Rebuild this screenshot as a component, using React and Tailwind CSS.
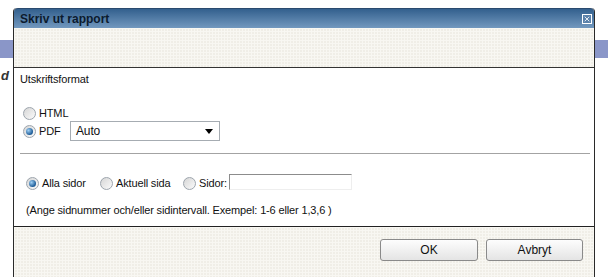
import { X } from 'lucide-react'

const font = 'font-["Liberation_Sans",Arial,sans-serif]'

function Radio({ checked }) {
  return (
    <span className="inline-flex w-[13px] h-[13px] shrink-0 items-center justify-center rounded-full border border-[#9da5ad] bg-[linear-gradient(135deg,#d6d6d6,#fbfbfb)]">
      {checked && (
        <span className="w-[7px] h-[7px] rounded-full bg-[radial-gradient(circle_at_35%_35%,#9fd0f5,#1b5a96_70%)]" />
      )}
    </span>
  )
}

function Option({ checked, label, className = '' }) {
  return (
    <label className={`flex shrink-0 items-center gap-[3px] ${className}`}>
      <Radio checked={checked} />
      <span>{label}</span>
    </label>
  )
}

const textured =
  'bg-[#f0eee7] bg-[linear-gradient(90deg,#f8f7f2_1px,transparent_1px),linear-gradient(#f8f7f2_1px,transparent_1px)] bg-[length:3px_3px]'

export default function App() {
  return (
    <div className={`relative w-[608px] h-[277px] overflow-hidden bg-white ${font}`}>
      {/* page behind the dialog */}
      <div className="mt-[40px] h-[18px] bg-[#8a96c8]" />
      <div className="mt-[8px] pl-[1px] text-[13px] font-bold italic text-[#333]">d</div>

      {/* dialog */}
      <div className="absolute left-[13px] top-[8px] w-[582px] h-[280px] flex flex-col border-x border-[#2a2a2a] rounded-t-[4px]">
        <div className="h-[20px] flex items-center justify-between pl-[6px] pr-[2px] rounded-t-[4px] bg-[linear-gradient(to_bottom,#33608e,#7298be)] border-t border-[#2a4a6e]">
          <span className="text-[12px] font-bold text-[#0c1b2e]">Skriv ut rapport</span>
          <span className="w-[10px] h-[10px] flex items-center justify-center border border-white bg-[#5c82aa]">
            <X className="w-[8px] h-[8px] text-white" strokeWidth={2.5} />
          </span>
        </div>

        <div className={`h-[40px] border-b border-[#333] ${textured}`} />

        <div className="h-[159px] border-b border-[#222] bg-white pl-[6px] pr-[4px] text-[11px] tracking-[-0.15px] text-[#111] flex flex-col">
          <div className="mt-[5px] leading-[13px]">Utskriftsformat</div>

          <Option className="mt-[20px] ml-[3px] h-[14px]" label="HTML" />

          <div className="mt-[1px] ml-[3px] h-[20px] flex items-center">
            <Option checked className="w-[47px]" label="PDF" />
            <div className="w-[150px] h-[20px] border border-[#a6acb2] flex items-center justify-between pl-[5px] pr-[6px] text-[12px]">
              <span>Auto</span>
              <span className="w-0 h-0 border-x-[4px] border-x-transparent border-t-[5px] border-t-black" />
            </div>
          </div>

          <div className="mt-[12px] h-px bg-[#a3a3a3]" />

          <div className="mt-[19px] ml-[6px] h-[18px] flex items-center">
            <Option checked className="w-[74px] translate-y-[1px]" label="Alla sidor" />
            <Option className="w-[83px] translate-y-[1px]" label="Aktuell sida" />
            <Option className="w-[46px] translate-y-[1px]" label="Sidor:" />
            <div className="w-[123px] h-[16px] border-t border-l border-[#8c8c8c] border-r border-b border-r-[#eee] border-b-[#eee]" />
          </div>

          <div className="mt-[13px] ml-[6px] leading-[12px]">
            (Ange sidnummer och/eller sidintervall. Exempel: 1-6 eller 1,3,6 )
          </div>
        </div>

        <div className={`flex-1 flex justify-end gap-[8px] pt-[12px] pr-[11px] ${textured}`}>
          <button className="w-[98px] h-[22px] rounded-[3px] border border-[#8a8a8a] bg-[linear-gradient(to_bottom,#fdfdfd,#e4e4e4)] text-[12px] text-[#111]">
            OK
          </button>
          <button className="w-[97px] h-[22px] rounded-[3px] border border-[#8a8a8a] bg-[linear-gradient(to_bottom,#fdfdfd,#e4e4e4)] text-[12px] text-[#111]">
            Avbryt
          </button>
        </div>
      </div>
    </div>
  )
}
